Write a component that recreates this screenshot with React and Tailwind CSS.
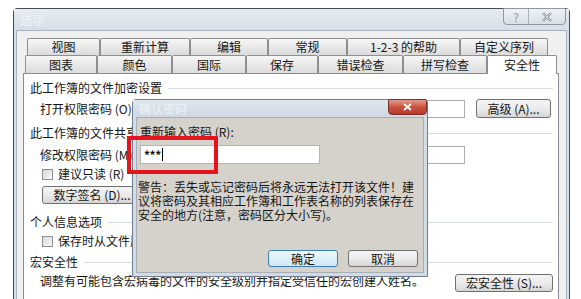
import React from 'react';

const ROW1 = [
  { label: '视图', cls: 'w-[73px]' },
  { label: '重新计算', cls: 'w-[90px]' },
  { label: '编辑', cls: 'w-[78px]' },
  { label: '常规', cls: 'w-[79px]' },
  { label: '1-2-3 的帮助', cls: 'w-[113px]' },
  { label: '自定义序列', cls: 'w-[88px]' },
];

const ROW2 = [
  { label: '图表', cls: 'w-[72px]' },
  { label: '颜色', cls: 'w-[75px]' },
  { label: '国际', cls: 'w-[74px]' },
  { label: '保存', cls: 'w-[72px]' },
  { label: '错误检查', cls: 'w-[85px]' },
  { label: '拼写检查', cls: 'w-[84px]' },
  { label: '安全性', cls: 'w-[70px]', active: true },
];

const btn =
  'border border-[#707070] rounded-[3px] bg-gradient-to-b from-[#f4f4f4] via-[#ebebeb] to-[#d5d5d5] flex items-center justify-center';

function Tab({ label, cls, active, h }) {
  if (active) {
    return (
      <div className={`${cls} h-[19px] -mb-px relative z-10 bg-white border-t border-l border-r border-[#8e8f8f] rounded-t-[2px] flex items-center justify-center`}>
        {label}
      </div>
    );
  }
  return (
    <div className={`${cls} ${h} border-t border-l border-r border-[#8e8f8f] rounded-t-[2px] bg-gradient-to-b from-[#f6f6f6] to-[#dcdcdc] flex items-center justify-center`}>
      {label}
    </div>
  );
}

function Header({ children, className = '' }) {
  return (
    <div className={`h-[20px] flex items-center ${className}`}>
      <span>{children}</span>
      <div className="flex-1 h-px bg-[#d5dde4] ml-[6px]" />
    </div>
  );
}

function Checkbox() {
  return <div className="w-[11px] h-[11px] border border-[#8f8f8f] bg-gradient-to-br from-[#d8d8d8] to-[#fafafa]" />;
}

export default function App() {
  return (
    <div className="relative w-[581px] h-[299px] overflow-hidden bg-white text-[12px] leading-[14px] text-[#151515] font-['Noto_Sans_CJK_SC','Liberation_Sans',sans-serif]">
      {/* main options window */}
      <div className="ml-[13px] mt-[8px] w-[557px] h-[300px] border border-[#474b52] rounded-t-[4px] bg-[#d6dee8] flex flex-col">
        <div className="h-[21px] flex items-start justify-between bg-gradient-to-b from-[#e6ecf2] to-[#d5dde7] pl-[6px] pr-[3px]">
          <span className="mt-[4px] text-[#eef2f6]">选项</span>
          <div className="flex h-[17px] -mt-px border border-[#8e98a4] rounded-b-[4px] bg-gradient-to-b from-[#eef2f6] to-[#d8dfe7]">
            <div className="w-[25px] flex items-center justify-center border-r border-[#a8b1bc] text-[#8a8f96] text-[11px]">?</div>
            <div className="w-[36px] flex items-center justify-center">
              <svg width="12" height="10" viewBox="0 0 12 10">
                <path d="M2 1 L10 9 M10 1 L2 9" stroke="#8c929a" strokeWidth="2.4" fill="none" />
                <path d="M2 1 L10 9 M10 1 L2 9" stroke="#eef1f4" strokeWidth="0.8" fill="none" />
              </svg>
            </div>
          </div>
        </div>

        <div className="mx-[2px] flex-1 bg-[#f0f0f0] border border-[#a9b3bf] pl-[6px] pr-[7px] pt-[7px] flex flex-col">
          <div className="flex ml-[4px] h-[17px]">
            {ROW1.map((t) => (
              <Tab key={t.label} {...t} h="h-[17px]" />
            ))}
          </div>
          <div className="flex items-end ml-[2px] h-[18px]">
            {ROW2.map((t) => (
              <Tab key={t.label} {...t} h="h-[18px]" />
            ))}
          </div>

          <div className="flex-1 border border-[#898c95] bg-white pl-[6px] pr-[5px] pt-[4px] flex flex-col">
            <Header>此工作簿的文件加密设置</Header>
            <div className="h-[21px] flex items-center pl-[10px]">
              <span className="w-[135px]">打开权限密码 (O):</span>
              <div className="w-[290px] h-[18px] border border-[#abadb3] bg-white" />
              <div className={`${btn} ml-[11px] w-[75px] h-[19px]`}>高级 (A)...</div>
            </div>

            <Header className="mt-[4px]">此工作簿的文件共享设置</Header>
            <div className="mt-[2px] h-[20px] flex items-center pl-[10px]">
              <span className="w-[135px]">修改权限密码 (M):</span>
              <div className="w-[290px] h-[18px] border border-[#abadb3] bg-white" />
            </div>
            <div className="h-[18px] flex items-center pl-[12px] gap-[5px]">
              <Checkbox />
              <span>建议只读 (R)</span>
            </div>
            <div className="mt-[3px] pl-[12px]">
              <div className={`${btn} w-[100px] h-[18px]`}>数字签名 (D)...</div>
            </div>

            <Header className="mt-[8px]">个人信息选项</Header>
            <div className="h-[18px] flex items-center pl-[12px] gap-[5px]">
              <Checkbox />
              <span>保存时从文件属性中删除个人信息</span>
            </div>

            <Header className="mt-[2px]">宏安全性</Header>
            <div className="h-[22px] flex items-start pl-[10px]">
              <span className="mt-[2px]">调整有可能包含宏病毒的文件的安全级别并指定受信任的宏创建人姓名。</span>
              <div className={`${btn} ml-auto mt-[2px] w-[98px] h-[18px]`}>宏安全性 (S)...</div>
            </div>
          </div>
        </div>
      </div>

      {/* confirm password dialog */}
      <div className="absolute left-[132px] top-[99px] w-[296px] h-[178px] border border-[#6f7d8d] rounded-t-[4px] bg-[#d3dce6] flex flex-col">
        <div className="h-[17px] flex items-center pl-[6px] bg-gradient-to-b from-[#dfe6ee] to-[#cfd8e3]">
          <span className="text-[#eef2f6]">确认密码</span>
        </div>
        <div className="absolute right-0 -top-px w-[39px] h-[16px] rounded-b-[4px] rounded-t-[2px] border border-[#7a2c27] bg-gradient-to-b from-[#e49a8f] via-[#c9513f] to-[#b8382a] flex items-center justify-center">
          <svg width="9" height="8" viewBox="0 0 9 8">
            <path d="M1 1 L8 7 M8 1 L1 7" stroke="#ffffff" strokeWidth="1.8" fill="none" />
          </svg>
        </div>
        <div className="mx-[3px] mb-[3px] flex-1 bg-[#d5d2cc] border border-[#a6aeb8] pl-[3px] pr-[5px] pt-[6px] pb-[5px] flex flex-col">
          <div className="h-[16px] flex items-center">重新输入密码 (R):</div>
          <div className="mt-[5px] w-[180px] h-[19px] border border-[#b5b5b5] bg-white flex items-center pl-[3px]">
            <span className="text-[12px] font-bold tracking-[-0.5px]">***</span>
            <span className="w-px h-[13px] bg-black ml-[1px]" />
          </div>
          <div className="mt-[16px] -ml-[2px] whitespace-nowrap">
            <div>警告：丢失或忘记密码后将永远无法打开该文件！建</div>
            <div>议将密码及其相应工作簿和工作表名称的列表保存在</div>
            <div>安全的地方(注意，密码区分大小写)。</div>
          </div>
          <div className="mt-auto flex justify-end gap-[10px]">
            <div className="w-[70px] h-[17px] border border-[#3c7fb1] rounded-[3px] bg-gradient-to-b from-[#eef7fd] to-[#cfe8f8] flex items-center justify-center">确定</div>
            <div className={`${btn} w-[70px] h-[17px]`}>取消</div>
          </div>
        </div>
      </div>

      {/* red highlight */}
      <div className="absolute left-[127px] top-[136px] w-[91px] h-[38px] border-[4px] border-[#e3141b]" />
    </div>
  );
}
